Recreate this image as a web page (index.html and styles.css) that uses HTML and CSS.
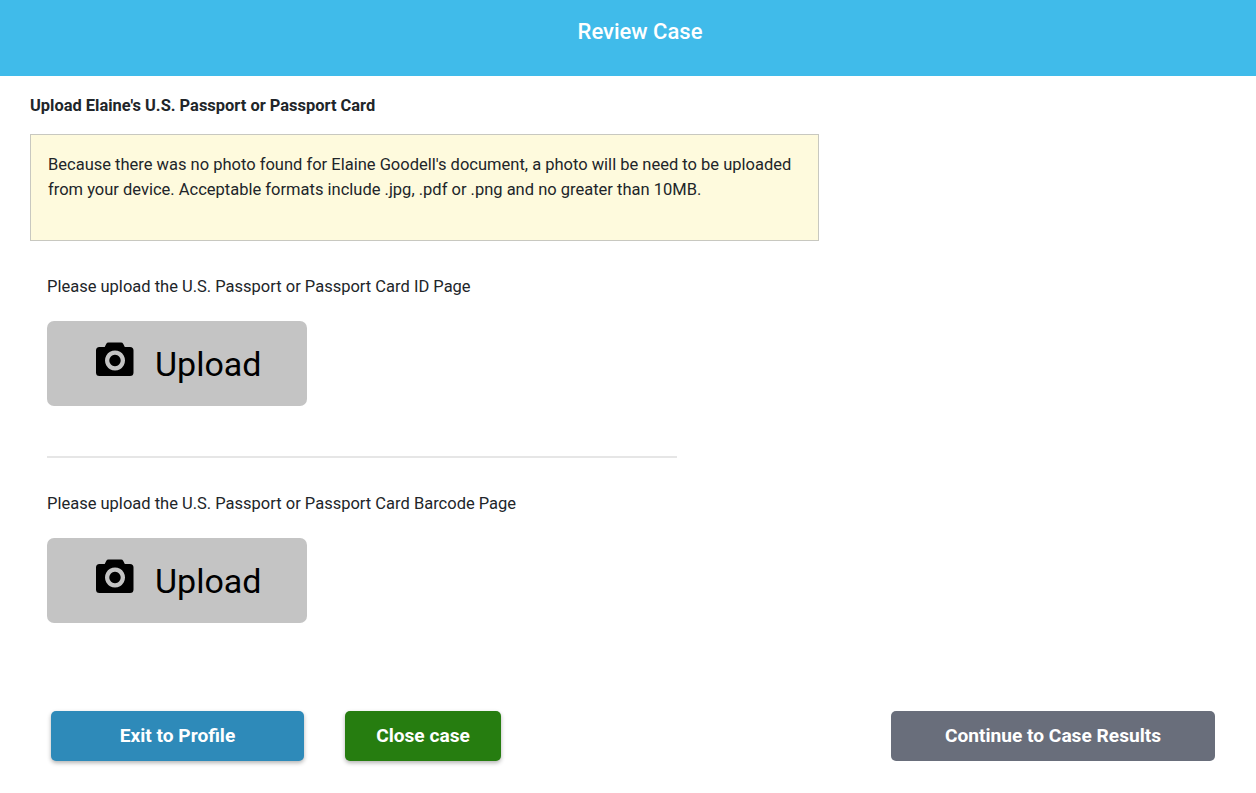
FILE: index.html
```html
<!DOCTYPE html>
<html lang="en">
<head>
    <meta charset="UTF-8">
    <meta name="viewport" content="width=device-width, initial-scale=1.0">
    <title>Review Case</title>
    <link rel="stylesheet" href="styles.css">
</head>
<body>
    <header class="top-bar">
        <h1>Review Case</h1>
    </header>

    <main class="content">
        <h2 class="page-title">Upload Elaine's U.S. Passport or Passport Card</h2>
        <div class="notice">Because there was no photo found for Elaine Goodell's document, a photo will be need to be uploaded from your device. Acceptable formats include .jpg, .pdf or .png and no greater than 10MB.</div>

        <section class="upload-section">
            <p class="upload-label">Please upload the U.S. Passport or Passport Card ID Page</p>
            <button class="upload-btn">
                <svg class="camera" viewBox="0 0 38 34"><path fill-rule="evenodd" d="M13 0.5h12q1.6 0 2.3 1.4l1.5 3.1h5.2q3.5 0 3.5 3.5v22q0 3.5-3.5 3.5h-30.500q-3.500 0-3.500-3.500v-22q0-3.500 3.500-3.500h5.200l1.500-3.100q.7-1.400 2.300-1.400zM19 8.500a10 10 0 1 0 .01 0zM19 12.800a5.700 5.700 0 1 1-.01 0z"/></svg>
                <span>Upload</span>
            </button>
        </section>

        <hr class="divider">

        <section class="upload-section">
            <p class="upload-label">Please upload the U.S. Passport or Passport Card Barcode Page</p>
            <button class="upload-btn">
                <svg class="camera" viewBox="0 0 38 34"><path fill-rule="evenodd" d="M13 0.5h12q1.6 0 2.3 1.4l1.5 3.1h5.2q3.5 0 3.5 3.5v22q0 3.5-3.5 3.500h-30.500q-3.500 0-3.500-3.500v-22q0-3.500 3.500-3.500h5.200l1.500-3.100q.7-1.400 2.300-1.400zM19 8.500a10 10 0 1 0 .01 0zM19 12.800a5.700 5.700 0 1 1-.01 0z"/></svg>
                <span>Upload</span>
            </button>
        </section>
    </main>

    <footer class="actions">
        <button class="btn btn-exit">Exit to Profile</button>
        <button class="btn btn-close">Close case</button>
        <button class="btn btn-continue">Continue to Case Results</button>
    </footer>
</body>
</html>
```

FILE: styles.css
```css
body {
    margin: 0;
    font-family: Roboto, Arial, sans-serif;
    color: #212529;
    background: white;
    height: 793px;
    overflow: hidden;
}
.top-bar {
    height: 76px;
    background: #40bbea;
    display: flex;
    align-items: center;
    justify-content: center;
    padding-left: 24px;
    padding-bottom: 14px;
    box-sizing: border-box;
}
.top-bar h1 {
    margin: 0;
    color: white;
    font-size: 22px;
    font-weight: 500;
}
.content {
    padding: 20px 30px 0;
}
.page-title {
    margin: 0 0 19px;
    font-size: 16.450px;
    line-height: 19px;
    font-weight: 700;
}
.notice {
    width: 789px;
    height: 107px;
    box-sizing: border-box;
    padding: 17px 17px 0;
    background: #fefadd;
    border: 1px solid #c8c8c0;
    font-size: 16.500px;
    line-height: 25px;
}
.upload-section {
    padding-left: 17px;
}
.upload-label {
    margin: 0;
    padding-top: 34px;
    font-size: 16.500px;
    line-height: 24px;
}
.upload-btn {
    display: flex;
    align-items: center;
    gap: 21px;
    width: 260px;
    height: 85px;
    margin-top: 22px;
    padding: 0 0 0 49px;
    background: #c4c4c4;
    border: none;
    border-radius: 7px;
    color: black;
    font-family: inherit;
    font-size: 34px;
    cursor: pointer;
}
.camera {
    width: 38px;
    height: 34px;
    margin-top: -10px;
}
.divider {
    width: 630px;
    margin: 50px 0 0 17px;
    border: none;
    border-top: 2px solid #e6e6e6;
}
.actions {
    display: flex;
    align-items: center;
    margin-top: 88px;
    padding: 0 41px 0 51px;
}
.btn {
    height: 50px;
    padding-bottom: 2px;
    border: none;
    border-radius: 5px;
    color: white;
    font-family: inherit;
    font-size: 19.150px;
    font-weight: 700;
    cursor: pointer;
}
.btn-exit {
    width: 253px;
    background: #2e8ab9;
    box-shadow: 0 2px 4px rgba(0, 0, 0, 0.3);
}
.btn-close {
    width: 156px;
    margin-left: 41px;
    background: #267d10;
    box-shadow: 0 2px 4px rgba(0, 0, 0, 0.3);
}
.btn-continue {
    width: 324px;
    margin-left: auto;
    background: #696e7b;
}
```
